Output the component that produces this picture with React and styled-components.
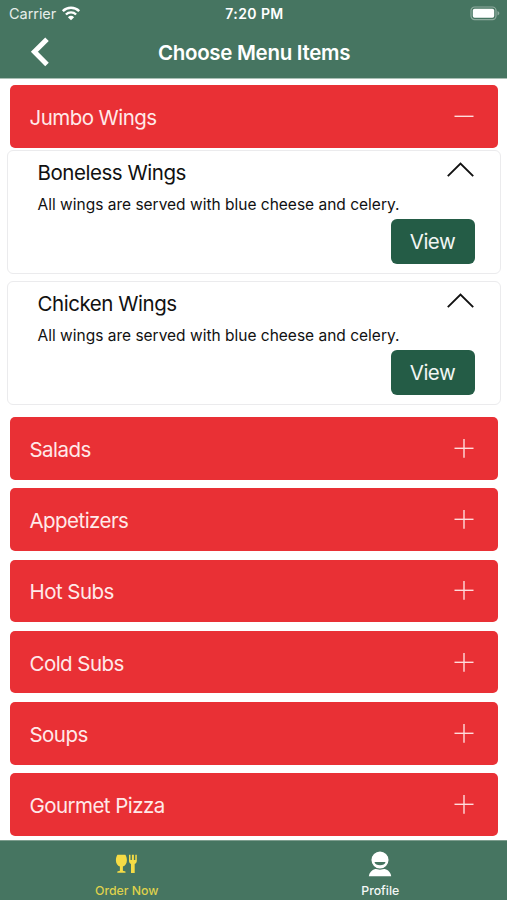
import React, { useState } from "react";
import styled, { createGlobalStyle } from "styled-components";

const wings = [
  {
    name: "Boneless Wings",
    description: "All wings are served with blue cheese and celery.",
  },
  {
    name: "Chicken Wings",
    description: "All wings are served with blue cheese and celery.",
  },
];

const categories = [
  { name: "Jumbo Wings", items: wings },
  { name: "Salads", items: [] },
  { name: "Appetizers", items: [] },
  { name: "Hot Subs", items: [] },
  { name: "Cold Subs", items: [] },
  { name: "Soups", items: [] },
  { name: "Gourmet Pizza", items: [] },
];

// icons
const WifiIcon = () => (
  <svg width="20" height="16" viewBox="0 0 20 16" fill="none">
    <path d="M1.8 5.2a11.7 11.7 0 0 1 16.4 0" stroke="#fff" strokeWidth="2.5" />
    <path d="M4.9 8.5a7.3 7.3 0 0 1 10.2 0" stroke="#fff" strokeWidth="2.4" />
    <path d="M10 14.3 6.9 11.2a4.5 4.5 0 0 1 6.2 0z" fill="#fff" />
  </svg>
);

const BatteryIcon = () => (
  <svg width="31" height="16" viewBox="0 0 31 16">
    <rect
      x="2"
      y="1"
      width="25"
      height="12.6"
      rx="3.6"
      fill="none"
      stroke="#8fac9f"
      strokeWidth="1.2"
    />
    <rect x="3.8" y="2.8" width="21.4" height="9" rx="1.8" fill="#fff" />
    <path d="M28.5 5.1c2.4.8 2.4 3.7 0 4.5z" fill="#8fac9f" />
  </svg>
);

const BackIcon = () => (
  <svg width="20" height="30" viewBox="0 0 20 30" fill="none">
    <path d="M17 2.2 4.4 14.8 17 27.4" stroke="#fff" strokeWidth="5" />
  </svg>
);

const ToggleIcon = ({ open }) => (
  <svg width="20" height="20" viewBox="0 0 20 20" stroke="#ffdcdc">
    <path d="M.5 9.3h19" strokeWidth="1.4" />
    {!open && <path d="M10 0v18.8" strokeWidth="1.4" />}
  </svg>
);

const ChevronUp = () => (
  <svg width="28" height="18" viewBox="0 0 28 18" fill="none">
    <path d="M.8 17.200 13.500 4.500l12.700 12.700" stroke="#111" strokeWidth="1.900" />
  </svg>
);

const FoodIcon = () => (
  <svg width="24" height="20" viewBox="0 0 24 20" fill="#f6dc45">
    <path d="M2.400.8h8c.9 1.600 1.500 3.500 1.500 5.400 0 3.300-1.600 5.500-4 6.300v4.300l2.600.7v1.300H2.300v-1.300l2.600-.7v-4.300C2.500 11.700.9 9.500.9 6.200.9 4.300 1.500 2.400 2.400.8z" />
    <path d="M14 .8h1.500V6h1.400V.8h2V6h1.400V.8h1.500v6c0 1.700-.8 2.700-2.100 3.200v9H16v-9c-1.200-.5-2-1.500-2-3.200z" />
  </svg>
);

const ProfileIcon = () => (
  <svg width="24" height="26" viewBox="0 0 24 26">
    <path
      d="M.8 25.300c.4-3.600 2.800-6.400 6.400-7.300h9.600c3.600.9 6 3.700 6.400 7.300z"
      fill="#fff"
    />
    <circle
      cx="12"
      cy="9"
      r="9.200"
      fill="#fff"
      stroke="#467561"
      strokeWidth="1.300"
    />
    <path d="M6.500 11h11c-.5 4.400-10.500 4.400-11 0z" fill="#467561" />
  </svg>
);

function MenuItem({ item }) {
  return (
    <Card>
      <CardTop>
        <ItemName>{item.name}</ItemName>
        <ChevronUp />
      </CardTop>
      <Description>{item.description}</Description>
      <ViewButton type="button">View</ViewButton>
    </Card>
  );
}

function Category({ category, open, onToggle }) {
  return (
    <section>
      <CategoryBar type="button" onClick={onToggle}>
        <CategoryName>{category.name}</CategoryName>
        <ToggleIcon open={open} />
      </CategoryBar>
      {open && category.items.length > 0 && (
        <ItemList>
          {category.items.map((item) => (
            <MenuItem key={item.name} item={item} />
          ))}
        </ItemList>
      )}
    </section>
  );
}

export default function App() {
  const [opened, setOpened] = useState("Jumbo Wings");

  return (
    <Screen>
      <GlobalStyle />
      <Header>
        <StatusBar>
          <Carrier>
            <span>Carrier</span>
            <WifiIcon />
          </Carrier>
          <Clock>7:20 PM</Clock>
          <Battery>
            <BatteryIcon />
          </Battery>
        </StatusBar>
        <NavBar>
          <BackButton type="button" aria-label="Back">
            <BackIcon />
          </BackButton>
          <Title>Choose Menu Items</Title>
        </NavBar>
      </Header>
      <Menu>
        {categories.map((category) => (
          <Category
            key={category.name}
            category={category}
            open={opened === category.name}
            onToggle={() =>
              setOpened(opened === category.name ? "" : category.name)
            }
          />
        ))}
      </Menu>
      <TabBar>
        <Tab $active>
          <TabIcon>
            <FoodIcon />
          </TabIcon>
          Order Now
        </Tab>
        <Tab>
          <TabIcon>
            <ProfileIcon />
          </TabIcon>
          Profile
        </Tab>
      </TabBar>
    </Screen>
  );
}

const GlobalStyle = createGlobalStyle`
  * {
    box-sizing: border-box;
  }
  body {
    margin: 0;
    background: #fff;
    font-family: Inter, "Liberation Sans", sans-serif;
  }
  button {
    border: none;
    padding: 0;
    font: inherit;
    cursor: pointer;
  }
  svg {
    display: block;
    flex-shrink: 0;
  }
`;

const Screen = styled.div`
  display: flex;
  flex-direction: column;
  width: 100%;
  height: 900px;
  overflow: hidden;
`;

const Header = styled.header`
  height: 79px;
  flex-shrink: 0;
  background: #467561;
  color: #fff;
  border-bottom: 1px solid #aabfb5;
`;

const StatusBar = styled.div`
  display: grid;
  grid-template-columns: 1fr auto 1fr;
  align-items: center;
  height: 27px;
  padding: 0 7px 0 9px;
`;

const Carrier = styled.div`
  display: flex;
  align-items: center;
  gap: 5px;
  font-size: 14.5px;
  letter-spacing: -0.05px;
  color: #e6eeea;
`;

const Clock = styled.div`
  font-size: 14px;
  font-weight: 600;
  letter-spacing: 0.4px;
`;

const Battery = styled.div`
  display: flex;
  justify-content: flex-end;
`;

const NavBar = styled.div`
  display: grid;
  grid-template-columns: 60px 1fr 60px;
  align-items: center;
  height: 50px;
`;

const BackButton = styled.button`
  display: flex;
  padding-left: 30px;
  background: none;
`;

const Title = styled.h1`
  margin: 0;
  padding: 1px 0 0 1px;
  text-align: center;
  font-size: 20.5px;
  font-weight: 600;
  letter-spacing: -0.3px;
  line-height: 26px;
`;

const Menu = styled.main`
  display: flex;
  flex-direction: column;
  flex: 1;
  gap: 8.5px;
  padding: 6px 9px 0 9.5px;
  overflow: hidden;
`;

const CategoryBar = styled.button`
  display: flex;
  align-items: center;
  justify-content: space-between;
  width: 100%;
  height: 62.7px;
  padding: 1px 24px 0 20px;
  border-radius: 5px;
  background: #e93035;
  color: #ffe9e9;
  font-size: 20.5px;
  letter-spacing: -0.55px;
`;

const CategoryName = styled.span`
  padding-top: 1.2px;
`;

const ItemList = styled.div`
  display: flex;
  flex-direction: column;
  gap: 6.5px;
  margin: 2.8px -2.5px 3.7px -2.5px;
`;

const Card = styled.article`
  display: flex;
  flex-direction: column;
  height: 124px;
  padding: 8px 25px 0 29.5px;
  border: 1.5px solid #ebebed;
  border-radius: 6px;
  color: #111;
`;

const CardTop = styled.div`
  display: flex;
  justify-content: space-between;
  height: 28px;
`;

const ItemName = styled.h2`
  margin: 0;
  font-size: 20.5px;
  font-weight: 400;
  letter-spacing: -0.45px;
  line-height: 28px;
`;

const Description = styled.p`
  margin: 6px 0 0;
  font-size: 15.5px;
  line-height: 24px;
  white-space: nowrap;
`;

const ViewButton = styled.button`
  align-self: flex-end;
  width: 84px;
  height: 45px;
  margin-top: 2px;
  border-radius: 6px;
  background: #245c46;
  color: #f1f6f3;
  font-size: 20.5px;
  letter-spacing: -0.5px;
`;

const TabBar = styled.nav`
  display: grid;
  grid-template-columns: 1fr 1fr;
  flex-shrink: 0;
  height: 60px;
  background: #467561;
  border-top: 1px solid #7d9d8e;
`;

const Tab = styled.div`
  display: flex;
  flex-direction: column;
  align-items: center;
  font-size: 12.3px;
  font-weight: 500;
  line-height: 16px;
  color: ${(props) => (props.$active ? "#dfd14c" : "#f4f8f6")};
`;

const TabIcon = styled.div`
  display: flex;
  align-items: center;
  height: 42px;
  padding-top: 3px;
`;
